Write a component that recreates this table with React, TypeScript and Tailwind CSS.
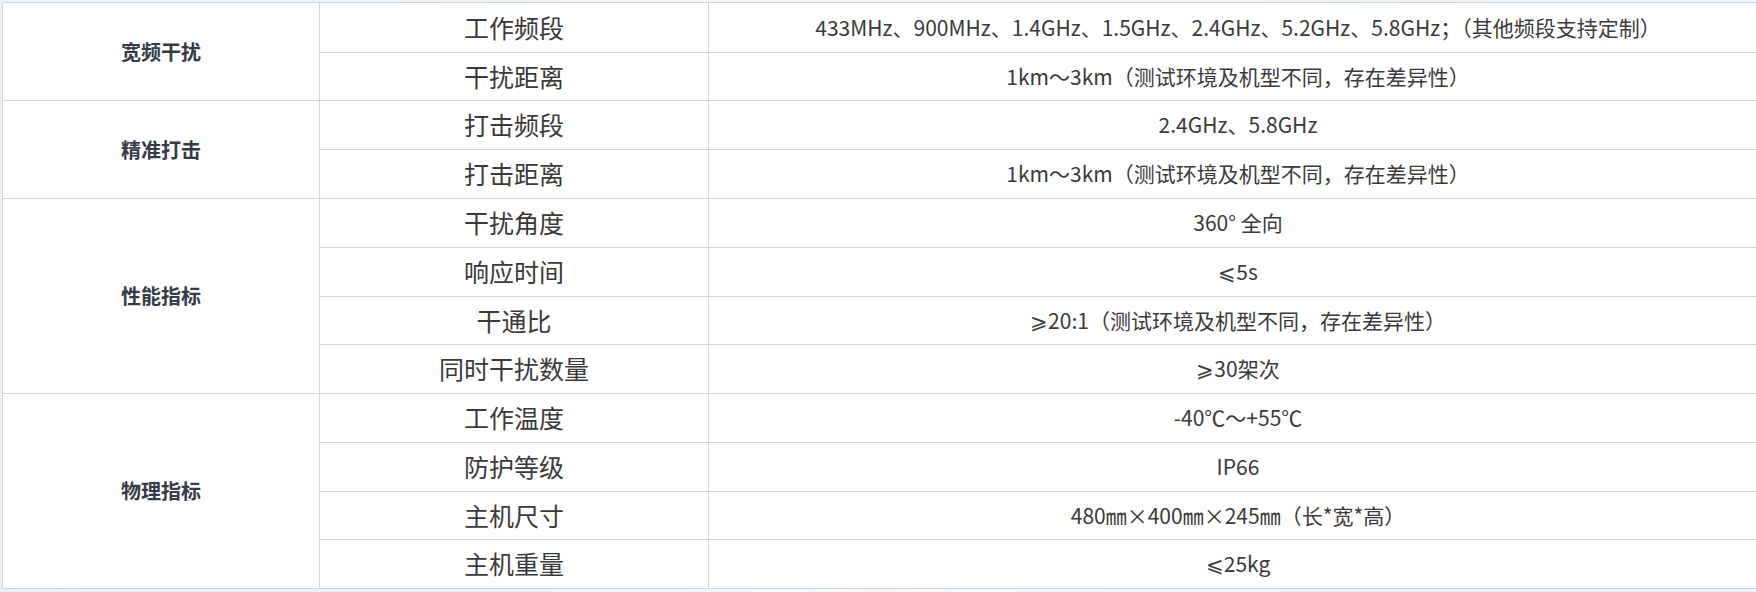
import React from "react";

interface SpecRow {
  name: string;
  value: string;
  h: number;
}

interface SpecGroup {
  title: string;
  rows: SpecRow[];
}

const groups: SpecGroup[] = [
  {
    title: "宽频干扰",
    rows: [
      {
        name: "工作频段",
        value:
          "433MHz、900MHz、1.4GHz、1.5GHz、2.4GHz、5.2GHz、5.8GHz；（其他频段支持定制）",
        h: 50,
      },
      { name: "干扰距离", value: "1km～3km（测试环境及机型不同，存在差异性）", h: 48 },
    ],
  },
  {
    title: "精准打击",
    rows: [
      { name: "打击频段", value: "2.4GHz、5.8GHz", h: 49 },
      { name: "打击距离", value: "1km～3km（测试环境及机型不同，存在差异性）", h: 49 },
    ],
  },
  {
    title: "性能指标",
    rows: [
      { name: "干扰角度", value: "360° 全向", h: 49 },
      { name: "响应时间", value: "⩽5s", h: 49 },
      { name: "干通比", value: "⩾20:1（测试环境及机型不同，存在差异性）", h: 48 },
      { name: "同时干扰数量", value: "⩾30架次", h: 49 },
    ],
  },
  {
    title: "物理指标",
    rows: [
      { name: "工作温度", value: "-40℃～+55℃", h: 49 },
      { name: "防护等级", value: "IP66", h: 49 },
      { name: "主机尺寸", value: "480㎜×400㎜×245㎜（长*宽*高）", h: 48 },
      { name: "主机重量", value: "⩽25kg", h: 49 },
    ],
  },
];

export default function App() {
  return (
    <div className="w-[1756px] h-[592px] overflow-hidden bg-gradient-to-r from-[#e6f1f9] via-[#f1f7fb] to-[#e8f2f9] pt-[2px] pl-[2px] font-['Noto_Sans_CJK_SC',sans-serif]">
      <table className="w-[1766px] border-collapse bg-white table-fixed">
        <colgroup>
          <col className="w-[317px]" />
          <col className="w-[389px]" />
          <col />
        </colgroup>
        <tbody>
          {groups.map((group) =>
            group.rows.map((row, i) => (
              <tr key={group.title + row.name} style={{ height: row.h }}>
                {i === 0 && (
                  <td
                    rowSpan={group.rows.length}
                    className="border border-[#d6d6d6] text-center align-middle text-[20px] font-bold text-[#363b48]"
                  >
                    {group.title}
                  </td>
                )}
                <td className="border border-[#d6d6d6] text-center align-middle text-[25px] text-[#3a3a3a]">
                  {row.name}
                </td>
                <td className="border border-[#d6d6d6] text-center align-middle text-[21px] text-[#3a3a3a] whitespace-nowrap">
                  {row.value}
                </td>
              </tr>
            ))
          )}
        </tbody>
      </table>
    </div>
  );
}
